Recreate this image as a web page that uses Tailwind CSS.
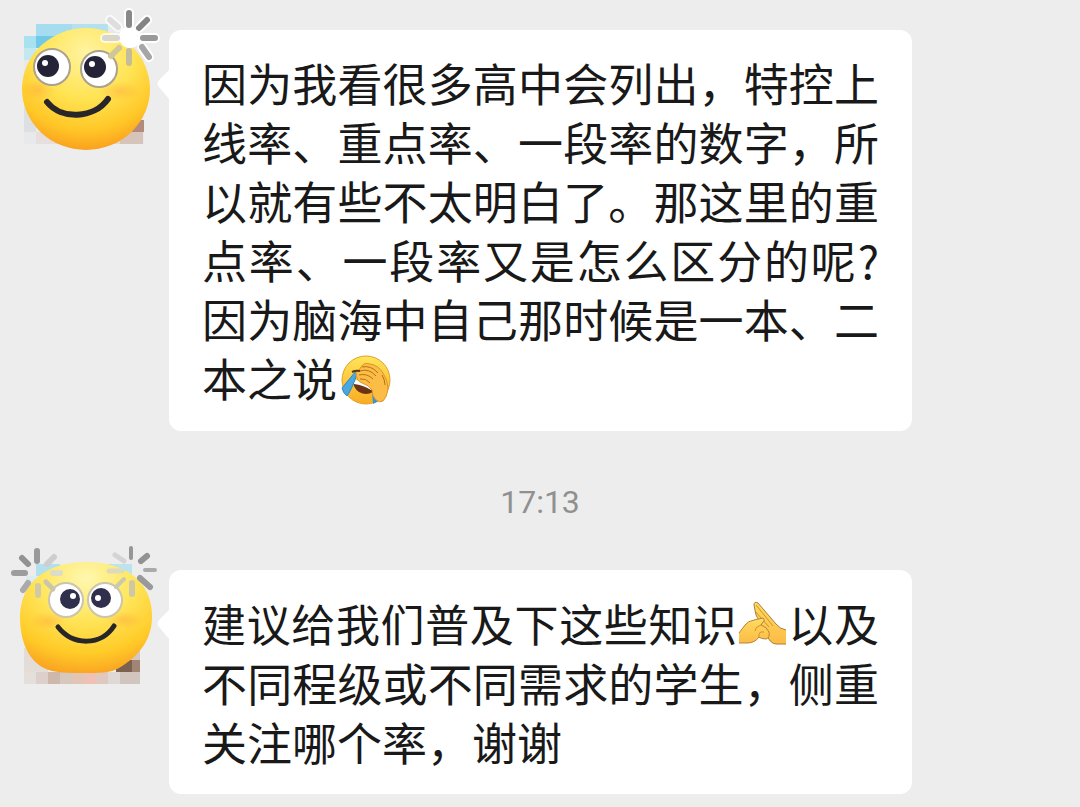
<!DOCTYPE html>
<html lang="zh-CN">
<head>
    <meta charset="UTF-8">
    <meta name="viewport" content="width=device-width, initial-scale=1.0">
    <title>聊天记录</title>
    <script src="https://cdn.jsdelivr.net/npm/@tailwindcss/browser@4"></script>
</head>
<body class="min-h-screen bg-[#ededed] text-[#191919] font-['Noto_Sans_CJK_SC',sans-serif]">
    <main>
        <!-- first message -->
        <article class="flex items-start">
            <svg class="w-[169px] h-[160px] shrink-0" viewBox="0 0 169 160" role="img" aria-label="头像">
                <defs>
                    <radialGradient id="face1" cx="0.5" cy="0.2" r="0.85">
                        <stop offset="0" stop-color="#fff4a0"/>
                        <stop offset="0.45" stop-color="#ffe352"/>
                        <stop offset="0.75" stop-color="#ffc727"/>
                        <stop offset="1" stop-color="#f9951c"/>
                    </radialGradient>
                    <radialGradient id="cheek">
                        <stop offset="0" stop-color="#ff9838" stop-opacity="0.35"/>
                        <stop offset="1" stop-color="#ff9838" stop-opacity="0"/>
                    </radialGradient>
                </defs>
                <g shape-rendering="crispEdges">
                    <path fill="#e8e9ea" d="M24 24h120v132H24z"/>
                    <path fill="#ededed" d="M24 24h12v12H24z"/>
                    <path fill="#a5dcef" d="M36 24h36v12H36z"/>
                    <path fill="#b5e0ed" d="M72 24h36v12H72z"/>
                    <path fill="#a8e1ef" d="M24 36h12v12H24z"/>
                    <path fill="#70c9e9" d="M36 36h24v12H36z"/>
                    <path fill="#c4e8f0" d="M24 48h12v12H24z"/>
                    <path fill="#dce0e2" d="M24 108h12v24H24z"/>
                    <path fill="#e6dfdd" d="M36 132h24v12H36z"/>
                    <path fill="#e5d8d2" d="M60 132h60v12H60z"/>
                    <path fill="#d6c4bb" d="M120 132h23v12h-23z"/>
                    <path fill="#b48a7c" d="M132 120h12v12h-12z"/>
                    <path fill="#ededed" d="M24 144h120v12H24z"/>
                </g>
                <ellipse cx="86" cy="89" rx="64" ry="61" fill="url(#face1)"/>
                <ellipse cx="38" cy="90" rx="17" ry="10" fill="url(#cheek)"/>
                <ellipse cx="120" cy="91" rx="21" ry="10" fill="url(#cheek)"/>
                <g fill="#fff" stroke="#aaa18e" stroke-width="2">
                    <circle cx="52" cy="67" r="18"/>
                    <circle cx="99" cy="69" r="18"/>
                </g>
                <g fill="#242338">
                    <circle cx="48" cy="66" r="11"/>
                    <circle cx="95" cy="67" r="11"/>
                </g>
                <g fill="#fff">
                    <circle cx="45" cy="63" r="3"/>
                    <circle cx="92" cy="64" r="3"/>
                </g>
                <path d="M47 102c14 18 47 17 61-3" fill="none" stroke="#29262a" stroke-width="6" stroke-linecap="round"/>
                <g fill="none" stroke-linecap="round">
                    <g stroke="#fff" stroke-width="10">
                        <path d="M129 13v12M147 20l-8 8M143 38h12M142 47l7 10"/>
                        <path d="M118 27l-8-7M117 38h-12" stroke-opacity="0.7"/>
                    </g>
                    <circle cx="130" cy="37" r="11" fill="#fff"/>
                    <g stroke-width="6">
                        <path d="M129 13v12" stroke="#888"/>
                        <path d="M147 20l-8 8" stroke="#858585"/>
                        <path d="M143 38h12" stroke="#999"/>
                        <path d="M142 47l7 10" stroke="#a6a6a6"/>
                        <path d="M129 51v12" stroke="#c4bd9b"/>
                        <path d="M119 48l-8 8" stroke="#d0c798"/>
                        <path d="M117 38h-12" stroke="#d6d6cd"/>
                        <path d="M118 27l-8-7" stroke="#dedede"/>
                    </g>
                </g>
                <path d="M169 70l-10 10q-3 4 0 7l10 12z" fill="#fff"/>
            </svg>
            <p class="mt-[30px] mr-[168px] flex-1 rounded-xl bg-white pt-[23px] pb-6 px-[33px] text-[45px] leading-[59px] text-justify">因为我看很多高中会列出，特控上线率、重点率、一段率的数字，所以就有些不太明白了。那这里的重点率、一段率又是怎么区分的呢?因为脑海中自己那时候是一本、二本之说<svg class="inline-block size-[50px] ml-1 -my-2 align-baseline" viewBox="0 0 50 50" role="img" aria-label="捂脸">
                    <defs>
                        <linearGradient id="palm-face" x1="0" y1="0" x2="0" y2="1">
                            <stop offset="0" stop-color="#ffe55a"/>
                            <stop offset="1" stop-color="#f9ac22"/>
                        </linearGradient>
                    </defs>
                    <circle cx="25" cy="25" r="24" fill="url(#palm-face)" stroke="#e2a02b"/>
                    <path d="M12 25l19 6 1 6q-7 4-14 0-6-4-6-12z" fill="#6b3215"/>
                    <path d="M13 25q10 0 18 6l-1 4q-8-5-17-6z" fill="#fff"/>
                    <path d="M15 16L1 33q1 5 5 8 5-7 10-22z" fill="#4aa7df" stroke="#3288bf" stroke-width="1"/>
                    <path d="M31 38h13q-4 8-12 11z" fill="#3a93cc"/>
                    <path d="M15 17q4-2 5-5 3-5 9-3 8 1 13 9 5 7 5 16-1 8-5 12-3 2-7-1-4-4-4-10-3-5-10-7-6-2-6-11z" fill="#fcbd46" stroke="#dc9426" stroke-width="1"/>
                    <path d="M19 16q9-3 16 5M18 20q8-2 14 4M19 24q6-1 10 4M21 12q9-2 16 6M41 20q3 5 3 10" fill="none" stroke="#b76f17" stroke-width="1"/>
                    <path d="M11 17q4-2 8-1" fill="none" stroke="#5b3515" stroke-width="2"/>
                </svg></p>
        </article>

        <time class="block pt-[51px] pb-[18px] text-center font-[Roboto,sans-serif] text-[32px] leading-10 text-[#909090]" datetime="17:13">17:13</time>

        <!-- second message -->
        <article class="flex items-start">
            <svg class="w-[169px] h-[160px] shrink-0" viewBox="0 0 169 160" role="img" aria-label="头像">
                <defs>
                    <radialGradient id="face2" cx="0.5" cy="0.15" r="0.9">
                        <stop offset="0" stop-color="#fff7b0"/>
                        <stop offset="0.4" stop-color="#ffe65c"/>
                        <stop offset="0.75" stop-color="#ffcb28"/>
                        <stop offset="1" stop-color="#f99c20"/>
                    </radialGradient>
                </defs>
                <g shape-rendering="crispEdges">
                    <path fill="#b4dfec" d="M36 24h24v12H36z"/>
                    <path fill="#bde4ee" d="M108 24h24v12h-24z"/>
                    <path fill="#dcecf0" d="M26 36h14v12H26z"/>
                    <path fill="#e3dcd7" d="M24 108h24v24H24z"/>
                    <path fill="#7c6050" d="M116 120h16v12h-16z"/>
                    <path fill="#a28475" d="M132 120h8v12h-8z"/>
                    <path fill="#d5c8c1" d="M128 108h12v12h-12z"/>
                    <path fill="#e5dfdc" d="M24 132h12v12H24z"/>
                    <path fill="#ddd0ca" d="M36 132h12v12H36z"/>
                    <path fill="#ceb8ac" d="M48 132h12v12H48z"/>
                    <path fill="#d7c8bd" d="M60 132h12v12H60z"/>
                    <path fill="#e3c5b6" d="M72 132h12v12H72z"/>
                    <path fill="#edc1b4" d="M84 132h12v12H84z"/>
                    <path fill="#e0c8bf" d="M96 132h12v12H96z"/>
                    <path fill="#dfd9d5" d="M108 132h12v12h-12z"/>
                    <path fill="#d2c5bd" d="M120 132h20v12h-20z"/>
                </g>
                <path d="M86 22c40 0 66 20 66 54 0 24-13 40-33 52-7 4-14 5-33 5s-32 0-42-5C26 119 20 97 20 77c0-34 26-55 66-55z" fill="url(#face2)"/>
                <ellipse cx="48" cy="81" rx="18" ry="9" fill="url(#cheek)"/>
                <ellipse cx="125" cy="80" rx="18" ry="9" fill="url(#cheek)"/>
                <g fill="#fff" stroke="#c9c5b0" stroke-width="2">
                    <circle cx="66" cy="60" r="17"/>
                    <circle cx="105" cy="60" r="17"/>
                </g>
                <g fill="#302f4c">
                    <circle cx="70" cy="59" r="10"/>
                    <circle cx="101" cy="58" r="10"/>
                </g>
                <g fill="#fff">
                    <circle cx="73" cy="56" r="3"/>
                    <circle cx="98" cy="58" r="3"/>
                </g>
                <path d="M58 87c15 19 43 19 56-1" fill="none" stroke="#292627" stroke-width="5" stroke-linecap="round"/>
                <g fill="none" stroke-width="6" stroke-linecap="round">
                    <path d="M37 11v10" stroke="#999"/>
                    <path d="M22 18l6 6" stroke="#929292"/>
                    <path d="M14 33h11" stroke="#9d9d9d"/>
                    <path d="M28 43l-5 7" stroke="#aaa"/>
                    <path d="M38 46v9" stroke="#d1cba5"/>
                    <path d="M46 42l7 7" stroke="#c9c6ac" stroke-width="5"/>
                    <path d="M53 33h7" stroke="#dedcc6"/>
                    <path d="M47 24l7-7" stroke="#cecece"/>
                </g>
                <g fill="none" stroke-width="4" stroke-linecap="round">
                    <path d="M131 8v10" stroke="#969696"/>
                    <path d="M141 21l6-5" stroke="#929292" stroke-width="6"/>
                    <path d="M145 30h10" stroke="#aaa"/>
                    <path d="M140 38l10 9" stroke="#999" stroke-width="6"/>
                    <path d="M132 43v11" stroke="#cec8a5" stroke-width="6"/>
                    <path d="M124 39l-8 8" stroke="#cbc8ac"/>
                    <path d="M122 31h-13" stroke="#dddac0" stroke-width="5"/>
                    <path d="M124 21l-9-6" stroke="#d4d4d4" stroke-width="5"/>
                </g>
                <path d="M169 70l-10 10q-3 4 0 7l10 12z" fill="#fff"/>
            </svg>
            <p class="mt-[30px] mr-[168px] flex-1 rounded-xl bg-white py-[23px] px-[33px] text-[45px] leading-[59px] text-justify"><span class="text-[44px]">建议给我们普及下这些知识</span><svg class="inline-block size-[50px] -my-2 align-baseline" viewBox="0 0 50 50" role="img" aria-label="合十">
                    <defs>
                        <linearGradient id="hand" x1="0" y1="0" x2="0" y2="1">
                            <stop offset="0" stop-color="#ffdc62"/>
                            <stop offset="1" stop-color="#fcbb45"/>
                        </linearGradient>
                    </defs>
                    <path d="M48 30q-6-1-10-6L20 3q-4-2-4 2l2 10 9 17q5 12 11 12h10z" fill="url(#hand)"/>
                    <path d="M48 30q-6-1-10-6L20 3q-4-2-4 2l2 10 9 17q5 12 11 12h10" fill="none" stroke="#a87d3c" stroke-width="1"/>
                    <path d="M18 5l17 21M17 11l14 16" fill="none" stroke="#d58f2a" stroke-width="1"/>
                    <path d="M1 33q3-4 6-8 3-4 9-5l9-2q3 2 0 4l-2 3q6 2 8 7 1 6-3 7-5 0-7-2-4 6-12 6H1z" fill="url(#hand)"/>
                    <path d="M1 33q3-4 6-8 3-4 9-5l9-2q3 2 0 4l-2 3q6 2 8 7 1 6-3 7-5 0-7-2-4 6-12 6H1" fill="none" stroke="#b98238" stroke-width="1"/>
                    <path d="M23 25q-6 2-6 6M21 37q-1-6 5-5" fill="none" stroke="#d58f2a" stroke-width="1"/>
                </svg>以及不同程级或不同需求的学生，侧重关注哪个率，谢谢</p>
        </article>
    </main>
</body>
</html>
